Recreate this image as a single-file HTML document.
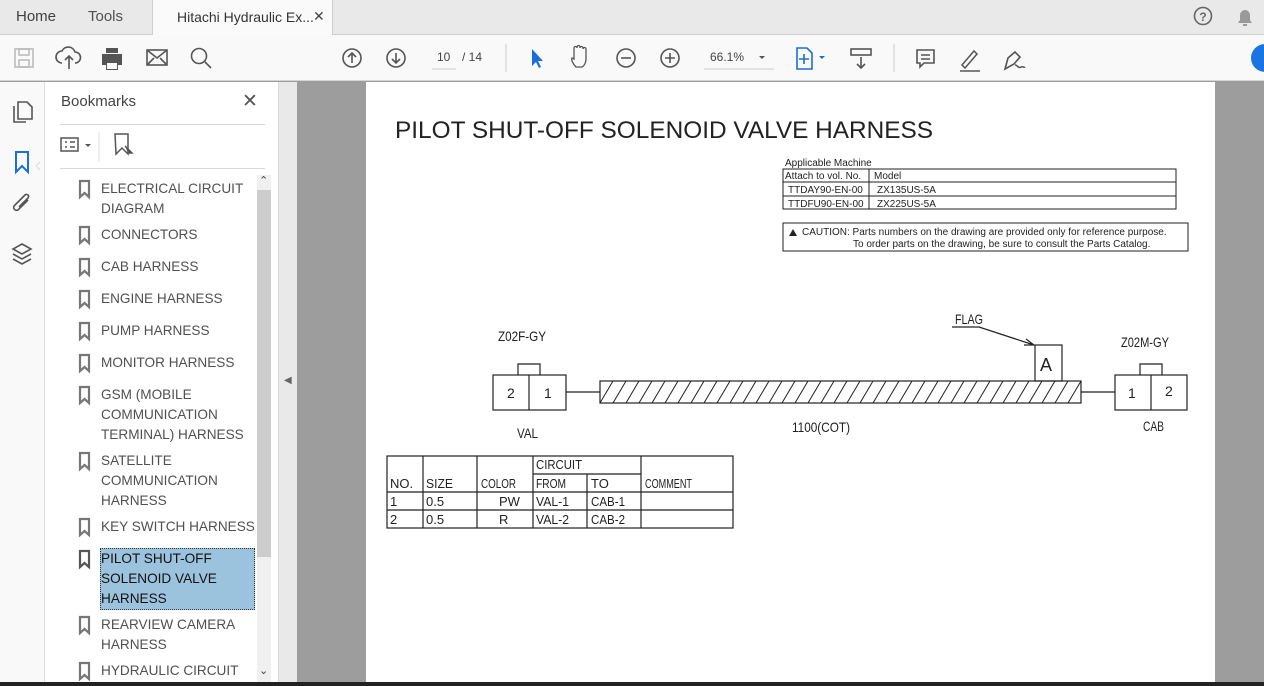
<!DOCTYPE html>
<html><head><meta charset="utf-8"><style>
*{margin:0;padding:0;box-sizing:border-box}
html,body{width:1264px;height:686px;overflow:hidden}
body{background:#9d9d9d;font-family:"Liberation Sans",sans-serif;position:relative}
.abs{position:absolute}
#tabs{left:0;top:0;width:1264px;height:35px;background:#e9e9e9;border-bottom:1px solid #d0d0d0}
#tb{left:0;top:35px;width:1264px;height:46px;background:#f9f9f9;border-bottom:1px solid #d4d4d4}
#rail{left:0;top:82px;width:45px;height:604px;background:#f9f9f9;border-right:1px solid #dcdcdc}
#panel{left:45px;top:82px;width:233px;height:604px;background:#fff;overflow:hidden}
#sep{left:278px;top:82px;width:19px;height:604px;background:#e9e9e9;border-left:1px solid #d8d8d8}
#page{left:366px;top:82px;width:849px;height:604px;background:#fff}
.bm{position:absolute;left:101px;font-size:13.6px;line-height:20px;color:#505050;white-space:nowrap}
</style></head><body>
<div id="tabs" class="abs">
 <span class="abs" style="left:16px;top:8px;font-size:15px;color:#404040">Home</span>
 <span class="abs" style="left:88px;top:8px;font-size:15px;color:#505050">Tools</span>
 <div class="abs" style="left:152px;top:0;width:181px;height:36px;background:#fafafa;border-left:1px solid #d0d0d0;border-right:1px solid #d0d0d0"></div>
 <span class="abs" style="left:177px;top:9px;font-size:14px;color:#333">Hitachi Hydraulic Ex...</span>
 <span class="abs" style="left:313px;top:8px;font-size:14px;color:#444">✕</span>
 <svg class="abs" style="left:1193px;top:6px" width="64" height="22"><circle cx="10" cy="10" r="8.5" fill="none" stroke="#666" stroke-width="1.6"/><text x="10" y="15" font-size="12" text-anchor="middle" fill="#666" font-weight="bold">?</text><path d="M45 17 h14 l-2-3 v-5 a5 5 0 0 0-10 0 v5 z M50 18 h4 v2 h-4z" fill="#999"/></svg>
</div>
<div id="tb" class="abs">
 <svg class="abs" style="left:0;top:0" width="1264" height="46" fill="none" stroke="#555" stroke-width="1.6">
  <rect x="15" y="14" width="18" height="18" stroke="#bbb"/><rect x="19" y="14" width="10" height="6" stroke="#bbb"/><rect x="19" y="25" width="10" height="7" stroke="#bbb"/>
  <path d="M62 28 a6 6 0 0 1 0-12 a7 7 0 0 1 13 1 a5 5 0 0 1 0 11 M69 34 v-12 M65 25 l4-4 4 4"/>
  <path d="M106 18 v-5 h12 v5 M102 19 h20 v11 h-20 z M106 27 h12 v8 h-12z" fill="#555" stroke="none"/><rect x="107" y="28" width="10" height="6" fill="#f9f9f9" stroke="none"/>
  <rect x="147" y="15" width="20" height="15"/><path d="M147 15 l10 8 10-8 M147 30 l7-7 M167 30 l-7-7"/>
  <circle cx="199" cy="21" r="7.5"/><path d="M205 27 l6 6"/>
  <circle cx="352" cy="23" r="9"/><path d="M352 28 v-10 M348 22 l4-4 4 4"/>
  <circle cx="396" cy="23" r="9"/><path d="M396 18 v10 M392 24 l4 4 4-4"/>
  <path d="M432 34 h24" stroke="#ccc" stroke-width="1"/>
  <path d="M506 9 v28" stroke="#ccc" stroke-width="1"/>
  <path d="M532 14 v17 l4-4 3 6 2-1 -3-6 5 0 z" fill="#1a6fd6" stroke="none"/>
  <path d="M576 32 c-3-3-5-7-4-9 l2 1 v-11 a1.5 1.5 0 0 1 3 0 v-1 a1.5 1.5 0 0 1 3 0 v1 a1.5 1.5 0 0 1 3 0 v1 a1.5 1.5 0 0 1 3 0 v10 c0 4-2 7-4 8z" stroke-width="1.3"/>
  <circle cx="626" cy="23" r="9"/><path d="M621 23 h10"/>
  <circle cx="670" cy="23" r="9"/><path d="M665 23 h10 M670 18 v10"/>
  <path d="M704 34 h70" stroke="#ccc" stroke-width="1"/>
  <path d="M759 21 h6 l-3 3z" fill="#555" stroke="none"/>
  <path d="M797 13 h10 l5 5 v16 h-15z" stroke="#1a6fd6"/><path d="M804 19 v10 M799 24 h10" stroke="#1a6fd6"/><path d="M819 21 h6 l-3 3z" fill="#1a6fd6" stroke="none"/>
  <rect x="851" y="14" width="20" height="6"/><path d="M861 22 v11 M857 29 l4 4 4-4"/>
  <path d="M894 9 v28" stroke="#ccc" stroke-width="1"/>
  <path d="M917 15 h17 v13 h-10 l-4 4 v-4 h-3z M921 20 h9 M921 24 h9"/>
  <path d="M962 30 l12-14 3 3 -12 14 z M960 36 h20" stroke-width="1.5"/>
  <path d="M1005 34 l3-11 7-6 5 5 -6 7z M1015 30 c3 0 3 4 6 2 c2-1 3 1 4 0"/>
 </svg>
 <span class="abs" style="left:437px;top:15px;font-size:12px;color:#444">10</span>
 <span class="abs" style="left:462px;top:15px;font-size:12px;color:#444">/ 14</span>
 <span class="abs" style="left:710px;top:15px;font-size:12px;color:#444">66.1%</span>
 <div class="abs" style="left:1251px;top:9px;width:28px;height:28px;border-radius:50%;background:#1b74e4"></div>
</div>
<div id="rail" class="abs">
 <svg width="45" height="200" fill="none" stroke="#555" stroke-width="1.6">
  <path d="M14 24 v16 h12 M18 20 h9 l5 5 v12 h-14z"/>
  <path d="M16 70 h12 v20 l-6-6 -6 6z" stroke="#1a6fd6" stroke-width="2"/>
  <path d="M40 80 l-4 4 4 4" stroke="#ddd" stroke-width="1"/>
  <path d="M28 118 l-10 10 a3 3 0 0 1-4-4 l11-11 a2 2 0 0 1 3 3 l-9 9"/>
  <path d="M22 162 l9 5 -9 5 -9-5z M13 172 l9 5 9-5 M13 177 l9 5 9-5"/>
 </svg>
</div>
<div id="panel" class="abs">
 <span class="abs" style="left:16px;top:11px;font-size:15px;color:#444">Bookmarks</span>
 <span class="abs" style="left:197px;top:8px;font-size:19px;color:#555">✕</span>
 <div class="abs" style="left:15px;top:42px;width:205px;height:1px;background:#d8d8d8"></div>
 <svg class="abs" style="left:14px;top:48px" width="90" height="36" fill="none" stroke="#555" stroke-width="1.5"><rect x="2" y="8" width="17" height="13"/><path d="M6 12 h2 M11 12 h5 M6 17 h2 M11 17 h5"/><path d="M26 14 h6 l-3 3z" fill="#555" stroke="none"/><path d="M40 2 v30" stroke="#ddd" stroke-width="1"/><path d="M56 4 h13 v20 l-6-6 -6 6z"/><path d="M66 16 l7 7 -4 0" fill="#555"/></svg>
 <div class="abs" style="left:15px;top:86px;width:205px;height:1px;background:#d8d8d8"></div>
 <div class="abs" style="left:212px;top:93px;width:14px;height:507px;background:#f0f0f0"></div>
 <div class="abs" style="left:212px;top:108px;width:14px;height:367px;background:#cdcdcd"></div>
 <span class="abs" style="left:214px;top:92px;font-size:11px;color:#444">⌃</span>
 <span class="abs" style="left:214px;top:582px;font-size:11px;color:#444">⌄</span>
</div>
<div id="sep" class="abs"><span class="abs" style="left:5px;top:293px;font-size:10px;color:#666">◀</span></div>
<div class="abs" style="left:100px;top:548px;width:155px;height:62px;background:#9cc3de;border:1px dotted #333"></div>
<svg class="abs" style="left:0;top:0" width="100" height="686">
 <g fill="none" stroke="#777" stroke-width="2.2">
 <path d="M80 181 h9 v16 l-4.5-4 -4.5 4z"/><path d="M80 227 h9 v16 l-4.5-4 -4.5 4z"/><path d="M80 259 h9 v16 l-4.5-4 -4.5 4z"/><path d="M80 291 h9 v16 l-4.5-4 -4.5 4z"/><path d="M80 323 h9 v16 l-4.5-4 -4.5 4z"/><path d="M80 355 h9 v16 l-4.5-4 -4.5 4z"/><path d="M80 387 h9 v16 l-4.5-4 -4.5 4z"/><path d="M80 453 h9 v16 l-4.5-4 -4.5 4z"/><path d="M80 519 h9 v16 l-4.5-4 -4.5 4z"/><path d="M80 551 h9 v16 l-4.5-4 -4.5 4z" stroke="#555"/><path d="M80 617 h9 v16 l-4.5-4 -4.5 4z"/><path d="M80 663 h9 v16 l-4.5-4 -4.5 4z"/>
 </g></svg>
<div class="bm" style="top:179px">ELECTRICAL CIRCUIT<br>DIAGRAM</div>
<div class="bm" style="top:225px">CONNECTORS</div>
<div class="bm" style="top:257px">CAB HARNESS</div>
<div class="bm" style="top:289px">ENGINE HARNESS</div>
<div class="bm" style="top:321px">PUMP HARNESS</div>
<div class="bm" style="top:353px">MONITOR HARNESS</div>
<div class="bm" style="top:385px">GSM (MOBILE<br>COMMUNICATION<br>TERMINAL) HARNESS</div>
<div class="bm" style="top:451px">SATELLITE<br>COMMUNICATION<br>HARNESS</div>
<div class="bm" style="top:517px">KEY SWITCH HARNESS</div>
<div class="bm" style="top:549px;color:#111">PILOT SHUT-OFF<br>SOLENOID VALVE<br>HARNESS</div>
<div class="bm" style="top:615px">REARVIEW CAMERA<br>HARNESS</div>
<div class="bm" style="top:661px">HYDRAULIC CIRCUIT</div>
<div id="page" class="abs"></div>
<svg class="abs" style="left:0;top:0" width="1264" height="686" font-family="Liberation Sans, sans-serif">
 <text x="395" y="138" font-size="24.4" fill="#222">PILOT SHUT-OFF SOLENOID VALVE HARNESS</text>
 <g font-size="10" fill="#222">
 <text x="785" y="166">Applicable Machine</text>
 <rect x="783" y="169" width="393" height="40" fill="none" stroke="#222"/>
 <path d="M783 182 h393 M783 196 h393 M869 169 v40" stroke="#222"/>
 <text x="785" y="179">Attach to vol. No.</text><text x="874" y="179">Model</text>
 <text x="788" y="193">TTDAY90-EN-00</text><text x="877" y="193">ZX135US-5A</text>
 <text x="788" y="207">TTDFU90-EN-00</text><text x="877" y="207">ZX225US-5A</text>
 <rect x="783" y="223" width="405" height="28" fill="none" stroke="#222"/>
 <path d="M789 236 l4-7 4 7z" fill="#222"/>
 <text x="802" y="235">CAUTION: Parts numbers on the drawing are provided only for reference purpose.</text>
 <text x="853" y="247">To order parts on the drawing, be sure to consult the Parts Catalog.</text>
 </g>
 <defs><pattern id="h" width="13" height="22" patternUnits="userSpaceOnUse" x="600" y="381"><path d="M0 22 L13 0 M-13 22 L0 0 M13 22 L26 0" stroke="#222" stroke-width="1"/></pattern></defs>
 <g fill="none" stroke="#222" stroke-width="1.2">
  <rect x="600" y="381" width="481" height="22" fill="url(#h)"/>
  <rect x="493" y="375" width="73" height="35"/><path d="M529 375 v35 M518 375 v-11 h22 v11"/>
  <path d="M566 392 h34 M1081 392 h34"/>
  <rect x="1115" y="375" width="72" height="35"/><path d="M1151 375 v35 M1140 375 v-11 h22 v11"/>
  <rect x="1035" y="345" width="27" height="36"/>
  <path d="M952 327 h27 l55 18 M1026 339 l8 6 -10 0"/>
 </g>
 <g font-size="14" fill="#222">
  <text x="498" y="341" textLength="48" lengthAdjust="spacingAndGlyphs">Z02F-GY</text>
  <text x="507" y="398">2</text><text x="544" y="398">1</text>
  <text x="517" y="438" textLength="21" lengthAdjust="spacingAndGlyphs">VAL</text>
  <text x="955" y="324" textLength="28" lengthAdjust="spacingAndGlyphs">FLAG</text>
  <text x="1040" y="371" font-size="18">A</text>
  <text x="1121" y="347" textLength="48" lengthAdjust="spacingAndGlyphs">Z02M-GY</text>
  <text x="1128" y="398">1</text><text x="1165" y="396">2</text>
  <text x="1143" y="431" textLength="21" lengthAdjust="spacingAndGlyphs">CAB</text>
  <text x="792" y="432" textLength="58" lengthAdjust="spacingAndGlyphs">1100(COT)</text>
 </g>
 <g fill="none" stroke="#222" stroke-width="1.2">
  <rect x="387" y="456" width="346" height="72"/>
  <path d="M387 492 h346 M387 510 h346 M423 456 v72 M477 456 v72 M533 456 v72 M641 456 v72 M533 474 h108 M587 474 v54"/>
 </g>
 <g font-size="13" fill="#222">
  <text x="536" y="469" textLength="46" lengthAdjust="spacingAndGlyphs">CIRCUIT</text>
  <text x="390" y="488">NO.</text><text x="426" y="488" textLength="27" lengthAdjust="spacingAndGlyphs">SIZE</text><text x="481" y="488" textLength="35" lengthAdjust="spacingAndGlyphs">COLOR</text><text x="536" y="488" textLength="30" lengthAdjust="spacingAndGlyphs">FROM</text><text x="591" y="488">TO</text><text x="645" y="488" textLength="47" lengthAdjust="spacingAndGlyphs">COMMENT</text>
  <text x="390" y="506">1</text><text x="426" y="506">0.5</text><text x="499" y="506">PW</text><text x="536" y="506" textLength="33" lengthAdjust="spacingAndGlyphs">VAL-1</text><text x="591" y="506" textLength="34" lengthAdjust="spacingAndGlyphs">CAB-1</text>
  <text x="390" y="524">2</text><text x="426" y="524">0.5</text><text x="499" y="524">R</text><text x="536" y="524" textLength="33" lengthAdjust="spacingAndGlyphs">VAL-2</text><text x="591" y="524" textLength="34" lengthAdjust="spacingAndGlyphs">CAB-2</text>
 </g>
</svg>
<div class="abs" style="left:0;top:682px;width:1264px;height:4px;background:#222"></div>
</body></html>
